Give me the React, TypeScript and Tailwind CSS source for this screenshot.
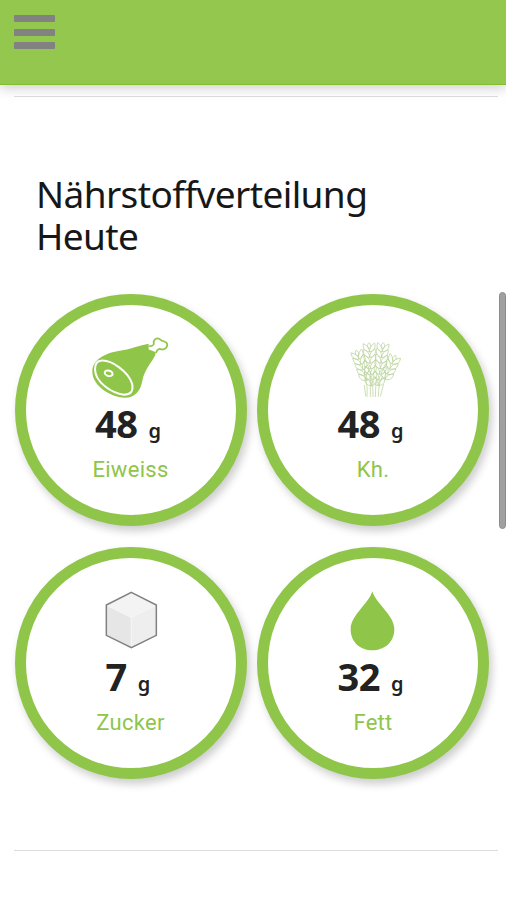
import type { ReactNode } from "react";

function HamIcon() {
  return (
    <svg viewBox="273 168 240 192" className="h-16 w-20">
      <path
        d="M446 191 C420 195 390 208 355 213 C318 219 277 238 277 275 C277 318 335 353 375 353 C405 353 422 332 427 302 C434 268 452 252 466 225 L467 215 L446 206Z"
        fill="#8fc549"
      />
      <path
        d="M445 208 L461 194 C455 180 472 170 482 179 C487 185 501 182 502 193 C502 207 488 211 479 206 L468 217Z"
        fill="#fff"
      />
      <path
        d="M447 198 C454 199 460 196 462 192 C457 181 471 169 481 179 C487 186 501 182 502 194 C501 207 488 211 479 206 C473 208 469 213 468 219"
        fill="none"
        stroke="#8fc549"
        strokeWidth="5"
        strokeLinejoin="round"
      />
      <g fill="none" stroke="#fff" strokeWidth="6">
        <path d="M302 242 C334 238 384 275 396 310 C402 336 390 344 372 344 C335 340 285 306 285 268 C285 250 291 243 302 242Z" />
        <ellipse cx="326" cy="280" rx="12" ry="8" transform="rotate(15 326 280)" />
      </g>
    </svg>
  );
}

const ears = [
  { x: 78, y: 61, angle: -20, rows: 5 },
  { x: 117, y: 38, angle: -3, rows: 7 },
  { x: 160, y: 38, angle: 7, rows: 7 },
  { x: 197, y: 76, angle: 24, rows: 4 },
];

function WheatIcon() {
  return (
    <svg viewBox="9 18 240 192" className="h-16 w-20">
      <g fill="none" stroke="#bdd5a0" strokeWidth="2.3">
        {ears.map((ear) => (
          <g key={ear.x} transform={`translate(${ear.x} ${ear.y}) rotate(${ear.angle})`}>
            <path d="M0 0 C-7 7 -6 13 0 19 C6 13 7 7 0 0" />
            {Array.from({ length: ear.rows }, (_, i) => (
              <g key={i} transform={`translate(0 ${i * 17 + 8})`}>
                <path d="M0 20 C-15 17 -20 8 -17 -6 C-6 0 0 8 0 20 C0 8 6 0 17 -6 C20 8 15 17 0 20" />
              </g>
            ))}
          </g>
        ))}
        <path d="M104 138 C112 160 112 180 111 201M121 150 L121 201M128 155 L129 201M138 150 L136 201M158 138 C146 160 146 180 145 201M103 165 L107 199M161 162 L151 199" />
      </g>
    </svg>
  );
}

function SugarIcon() {
  return (
    <svg viewBox="33 27 240 192" className="h-16 w-20">
      <path d="M154 37 L229 75 L154 112 L79 75Z" fill="#f3f3f3" />
      <path d="M79 75 L154 112 V203 L79 166Z" fill="#e6e6e6" />
      <path d="M229 75 L154 112 V203 L229 166Z" fill="#eeeeee" />
      <path d="M84 78 L148 109 Q154 112 160 109 L224 78M154 113 V198" fill="none" stroke="#f4f4f4" strokeWidth="4" />
      <path d="M154 37 L229 75 V166 L154 203 L79 166 V75Z" fill="none" stroke="#808080" strokeWidth="4.5" />
    </svg>
  );
}

function DropIcon() {
  return (
    <svg viewBox="9 27 240 192" className="h-16 w-20">
      <path
        d="M127 34 C138 72 193 105 193 148 C193 187 163 211 127 211 C91 211 62 187 62 148 C62 105 116 72 127 34Z"
        fill="#8fc549"
      />
    </svg>
  );
}

type Nutrient = { label: string; amount: number; icon: ReactNode };

const nutrients: Nutrient[] = [
  { label: "Eiweiss", amount: 48, icon: <HamIcon /> },
  { label: "Kh.", amount: 48, icon: <WheatIcon /> },
  { label: "Zucker", amount: 7, icon: <SugarIcon /> },
  { label: "Fett", amount: 32, icon: <DropIcon /> },
];

function NutrientCircle({ label, amount, icon }: Nutrient) {
  return (
    <div className="flex h-[232px] w-[232px] flex-col items-center rounded-full border-[11px] border-[#8fc549] bg-white pt-[31px] shadow-[3px_5px_8px_rgba(0,0,0,0.2)]">
      {icon}
      <div className="flex h-12 items-baseline gap-[11px] pr-[5px] font-['Noto_Sans',sans-serif] leading-[46px] text-[#222]">
        <span className="text-[38px] font-bold tracking-[-0.5px]">{amount}</span>
        <span className="text-[20px] font-semibold">g</span>
      </div>
      <span className="mt-1.5 font-['Roboto',sans-serif] text-[22px] leading-8 tracking-[0.3px] text-[#8fc549]">
        {label}
      </span>
    </div>
  );
}

export default function App() {
  return (
    <div className="relative h-[900px] w-full overflow-hidden bg-white">
      <header className="relative h-[85px] border-b border-[#86bd2c] bg-[#94c74e] px-3.5 pt-[15px] shadow-[0_3px_12px_rgba(0,0,0,0.2)]">
        <button aria-label="Menu" className="flex w-[41px] flex-col gap-[6.5px]">
          <span className="h-[7px] w-full rounded-[1px] bg-[#828282]" />
          <span className="h-[7px] w-full rounded-[1px] bg-[#828282]" />
          <span className="h-[7px] w-full rounded-[1px] bg-[#828282]" />
        </button>
      </header>

      <main className="pr-2 pl-[14px]">
        <hr className="mt-[11px] border-[#dfdfdf]" />
        <h1 className="mt-[76px] ml-[22px] w-[360px] font-['Noto_Sans',sans-serif] text-[37px] leading-[42px] tracking-[-0.6px] text-[#171717]">
          Nährstoffverteilung Heute
        </h1>
        <div className="mt-[37px] ml-[0.5px] grid w-max grid-cols-2 gap-x-[10.5px] gap-y-[21px]">
          {nutrients.map((n) => (
            <NutrientCircle key={n.label} {...n} />
          ))}
        </div>
        <hr className="mt-[71px] border-[#dddddd]" />
      </main>

      {/* Scrollbar */}
      <div className="absolute top-[292px] right-0 h-[237px] w-[7px] rounded-full border border-[#8c8c8c] bg-[#a0a0a0]" />
    </div>
  );
}
